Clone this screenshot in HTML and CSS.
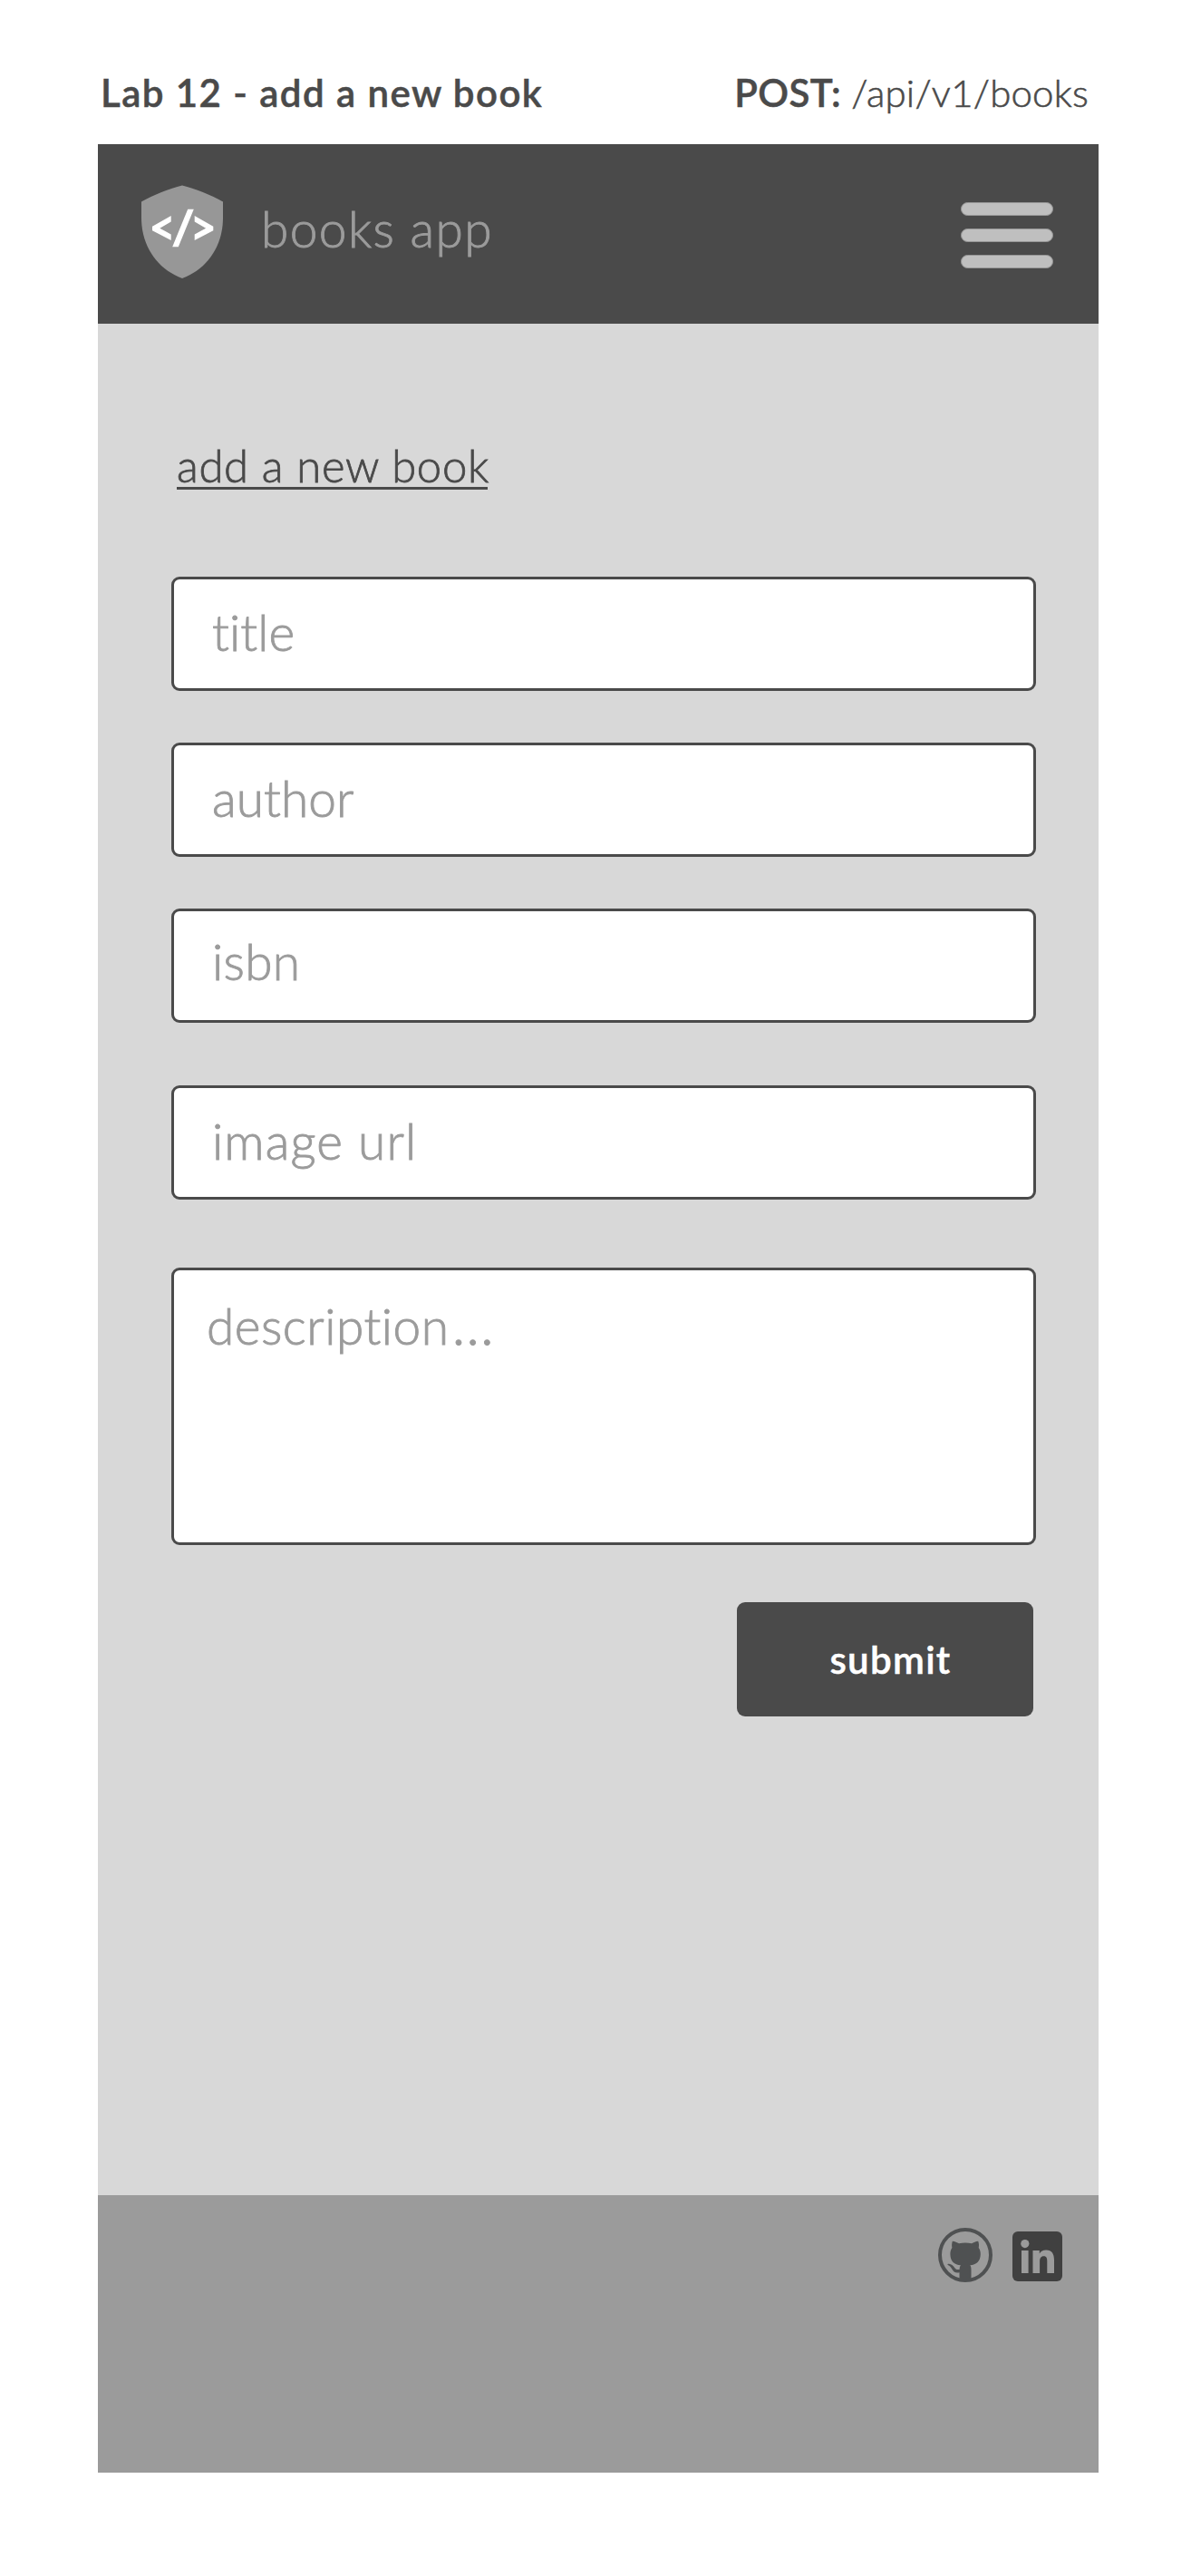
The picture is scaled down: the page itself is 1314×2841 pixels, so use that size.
FILE: index.html
```html
<!DOCTYPE html>
<html lang="en">
<head>
<meta charset="utf-8">
<title>Books app</title>
<link rel="stylesheet" href="styles.css">
</head>
<body>
<div class="caption">
  <span class="caption-title">Lab 12 - add a new book</span>
  <span class="caption-route"><b class="caption-verb">POST:</b><span class="caption-path">/api/v1/books</span></span>
</div>
<div class="app">
  <header class="header">
    <svg class="shield" viewBox="0 0 92 104" width="92" height="104" aria-hidden="true">
      <path fill="#979797" d="M46 .5C60 4 78 11 91 18.500V36C91 68 73 93 46 103C19 93 1 68 1 36V18.500C14 11 32 4 46 .5Z"/>
      <path fill="#fff" d="M33.700 34v6.500L21.300 47.700l12.400 6.700v6.500L13 50.300v-4.600zM59.700 34v6.500l12.400 7.200-12.400 6.700v6.500l20.600-10.600v-4.600zM52.200 26.700h6.600L41.800 68.200h-6.600z"/>
    </svg>
    <span class="brand">books app</span>
    <div class="menu"><i class="menu-bar"></i><i class="menu-bar"></i><i class="menu-bar"></i></div>
  </header>
  <main class="main">
    <h1 class="heading">add a new book</h1>
    <form class="form">
      <label class="field title">title</label>
      <label class="field author">author</label>
      <label class="field isbn">isbn</label>
      <label class="field image">image url</label>
      <label class="field description">description<span class="ellipsis">…</span></label>
      <button class="submit" type="button">submit</button>
    </form>
  </main>
  <footer class="footer">
    <svg class="github" viewBox="0 0 60 60" width="60" height="60" aria-hidden="true">
      <circle cx="30" cy="30" r="28" fill="none" stroke="#4f5152" stroke-width="4"/>
      <path fill="#4f5152" d="M15.800 14.700C18.500 14.900 21 16 23 17.300C27.500 16.200 32.500 16.200 37 17.300C39 16 41.500 14.900 44.200 14.700C45.200 17.300 45.200 19.700 44.700 22C46.200 24 46.800 26.300 46.800 29C46.800 37 42 40.700 35.300 41.300C36.200 42.500 36.500 44 36.500 46V58.500H23.500V49.300C19 50.200 16.800 48.300 15.300 45.500C14 43 13 42 10.700 41C10 40.300 10.800 39.700 12 39.800C14.500 40 16.500 41.500 18 43.800C19.300 45.900 21 46.500 23.600 45.900C23.700 44 24 42.500 24.900 41.300C18 40.700 13.400 37 13.400 29C13.400 26.300 14 24 15.400 22C14.900 19.700 15 17.300 15.800 14.700Z"/>
    </svg>
    <svg class="linkedin" viewBox="0 0 55 55" width="55" height="55" aria-hidden="true">
      <rect width="55" height="55" rx="6" fill="#404040"/>
      <g fill="#9b9b9b">
        <circle cx="13.800" cy="13.600" r="4.600"/>
        <path d="M10 21h7.600v25H10zM22.500 21h7.300v3.400C31.200 22 33.800 20.400 37 20.400C43.800 20.400 46 24.800 46 31.500V46H38.300V33C38.300 29.700 37.800 27.200 34.600 27.200C31.200 27.200 30.100 29.800 30.100 33V46H22.500z"/>
      </g>
    </svg>
  </footer>
</div>
</body>
</html>
```
FILE: styles.css
```css
* {
  box-sizing: border-box;
}

body {
  margin: 0;
  background: #fff;
  color: #4a4a4a;
  font-family: Lato, sans-serif;
  font-weight: 300;
  white-space: nowrap;
}

.caption {
  display: flex;
  justify-content: space-between;
  height: 159px;
  padding: 77px 113px 0 111px;
  font-size: 42px;
  line-height: 50px;
}

.caption-title {
  font-weight: 600;
  letter-spacing: 1.45px;
  -webkit-text-stroke: .5px;
}

.caption-route {
  display: flex;
  gap: 11px;
}

.caption-verb {
  font-weight: 600;
  letter-spacing: .4px;
  -webkit-text-stroke: .5px;
}

.caption-path {
  letter-spacing: .2px;
  -webkit-text-stroke: .6px;
}

.app {
  width: 1104px;
  margin-left: 108px;
}

.header {
  display: flex;
  align-items: flex-start;
  height: 198px;
  padding: 45px 50px 0 47px;
  background: #4a4a4a;
  color: #9b9b9b;
}

.brand {
  margin: 16px auto 0 41px;
  font-size: 55px;
  line-height: 65px;
  letter-spacing: 1.4px;
  -webkit-text-stroke: .9px;
}

.menu {
  display: flex;
  flex-direction: column;
  gap: 14px;
  margin-top: 19px;
}

.menu-bar {
  width: 102px;
  height: 15px;
  border: 1px solid #979797;
  border-radius: 8px;
  background: #bfbfbf;
}

.main {
  height: 2064px;
  padding: 130px 69px 0 81px;
  background: #d8d8d8;
}

.heading {
  width: 343px;
  height: 53px;
  margin: 0 0 96px 6px;
  border-bottom: 3px solid #4a4a4a;
  font-size: 49px;
  font-weight: 300;
  line-height: 52px;
  letter-spacing: .7px;
  -webkit-text-stroke: .8px;
}

.form {
  display: flex;
  flex-direction: column;
}

.field {
  height: 126px;
  margin-bottom: 57px;
  padding: 26px 42px 0;
  border: 3px solid #4a4a4a;
  border-radius: 9px;
  background: #fff;
  color: #9b9b9b;
  font-size: 55px;
  line-height: 64px;
  letter-spacing: .1px;
  -webkit-text-stroke: .9px;
}

.isbn {
  margin-bottom: 69px;
  padding-top: 23px;
  letter-spacing: .3px;
}

.image {
  margin-bottom: 75px;
  letter-spacing: 1.1px;
}

.description {
  height: 306px;
  margin-bottom: 63px;
  padding: 29px 36px 0;
  letter-spacing: .5px;
}

.ellipsis {
  margin-left: 3px;
  font-size: 64px;
  line-height: 0;
}

.submit {
  align-self: flex-end;
  width: 327px;
  height: 126px;
  margin-right: 3px;
  padding: 0 0 0 12px;
  border: 0;
  border-radius: 9px;
  background: #4a4a4a;
  color: #fff;
  font: 600 42px/50px Lato, sans-serif;
  letter-spacing: 1.3px;
  -webkit-text-stroke: .5px;
}

.footer {
  display: flex;
  align-items: flex-start;
  justify-content: flex-end;
  gap: 22px;
  height: 306px;
  padding: 36px 40px 0;
  background: #9b9b9b;
}

.linkedin {
  margin-top: 4px;
}
```
